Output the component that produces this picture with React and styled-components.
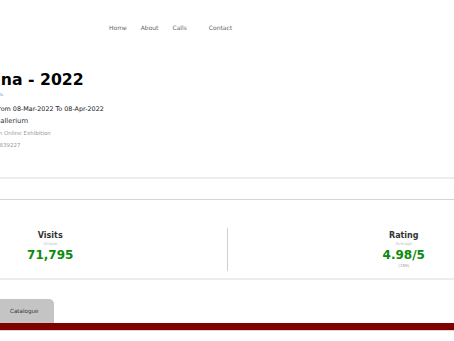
import styled, { createGlobalStyle } from "styled-components";

const GlobalStyle = createGlobalStyle`
  html, body {
    margin: 0;
    padding: 0;
    background: #fff;
    overflow: hidden;
  }
  body {
    font-family: "DejaVu Sans", Verdana, sans-serif;
  }
`;

const stats = [
  { label: "Visits", sub: "Unique", value: "71,795" },
  { label: "Rating", sub: "Average", value: "4.98/5", note: "(159)" },
];

function App() {
  return (
    <>
      <GlobalStyle />
      <Viewport>
        <Page>
          <Header>
            <Nav>
              <NavLink href="#">Home</NavLink>
              <NavLink href="#">About</NavLink>
              <NavLink href="#">Calls</NavLink>
              <NavLink href="#" $extra>
                Contact
              </NavLink>
            </Nav>
          </Header>

          <Info>
            <Title>Ina - 2022</Title>
            <BackLink href="#">Arts</BackLink>
            <Dates>From 08-Mar-2022 To 08-Apr-2022</Dates>
            <Venue>Gallerium</Venue>
            <Meta>An Online Exhibition</Meta>
            <Meta>#839227</Meta>
          </Info>

          <Rule />
          <TabStrip />

          <Stats>
            <Stat>
              <StatLabel>{stats[0].label}</StatLabel>
              <StatSub>{stats[0].sub}</StatSub>
              <StatValue>{stats[0].value}</StatValue>
            </Stat>
            <StatDivider />
            <Stat>
              <StatLabel>{stats[1].label}</StatLabel>
              <StatSub>{stats[1].sub}</StatSub>
              <StatValue>{stats[1].value}</StatValue>
              <StatNote>{stats[1].note}</StatNote>
            </Stat>
          </Stats>

          <Rule />

          <Tabs>
            <Tab>Catalogue</Tab>
          </Tabs>
          <RedBar />
        </Page>
      </Viewport>
    </>
  );
}

const Viewport = styled.div`
  display: flex;
  justify-content: center;
  width: 100%;
  overflow: hidden;
`;

const Page = styled.div`
  flex: 0 0 706px;
  width: 706px;
`;

const Header = styled.header`
  height: 54px;
  display: flex;
  align-items: center;
  padding-left: 235px;
`;

const Nav = styled.nav`
  display: flex;
  gap: 14px;
`;

const NavLink = styled.a`
  font-size: 6px;
  color: #666;
  text-decoration: none;
  margin-left: ${p => (p.$extra ? "8px" : "0")};
`;

const Info = styled.section`
  display: flex;
  flex-direction: column;
  padding: 16px 0 0 121px;
`;

const Title = styled.h1`
  margin: 0;
  font-size: 15.7px;
  line-height: 20px;
  font-weight: bold;
  color: #000;
`;

const BackLink = styled.a`
  font-size: 4px;
  line-height: 10px;
  color: #4a8fd8;
  text-decoration: none;
`;

const Dates = styled.div`
  margin-top: 3px;
  font-size: 6.4px;
  line-height: 12px;
  color: #222;
`;

const Venue = styled.div`
  font-size: 6.8px;
  line-height: 12px;
  color: #333;
`;

const Meta = styled.div`
  font-size: 5.5px;
  line-height: 12px;
  color: #999;
`;

const Rule = styled.hr`
  margin: 26px 0 0;
  border: 0;
  height: 2px;
  background: #ececec;
`;

const TabStrip = styled.div`
  height: 20px;
  border-bottom: 1px solid #d4d4d4;
`;

const Stats = styled.section`
  display: grid;
  grid-template-columns: 1fr 1px 1fr;
  padding: 28px 0 7px;

  & + ${Rule} {
    margin-top: 0;
  }
`;

const Stat = styled.div`
  display: flex;
  flex-direction: column;
  align-items: center;
  padding-top: 3px;
`;

const StatDivider = styled.div`
  height: 43px;
  background: #cfcfcf;
`;

const StatLabel = styled.div`
  font-size: 8px;
  line-height: 10px;
  font-weight: bold;
  color: #333;
`;

const StatSub = styled.div`
  font-size: 4px;
  line-height: 5px;
  color: #c4c4c4;
`;

const StatValue = styled.div`
  font-size: 12px;
  line-height: 18px;
  font-weight: bold;
  color: #0b8a0b;
`;

const StatNote = styled.div`
  font-size: 4px;
  line-height: 4px;
  color: #999;
`;

const Tabs = styled.nav`
  display: flex;
  margin-top: 19px;
  padding-left: 121px;
`;

const Tab = styled.div`
  height: 24px;
  padding: 0 15.6px 0 15px;
  background: #c4c4c4;
  border-radius: 5px 5px 0 0;
  font-size: 5.6px;
  line-height: 24px;
  color: #333;
`;

const RedBar = styled.div`
  height: 7px;
  background: #800000;
  border-bottom: 1px solid #e2d6d6;
`;

export default App;
